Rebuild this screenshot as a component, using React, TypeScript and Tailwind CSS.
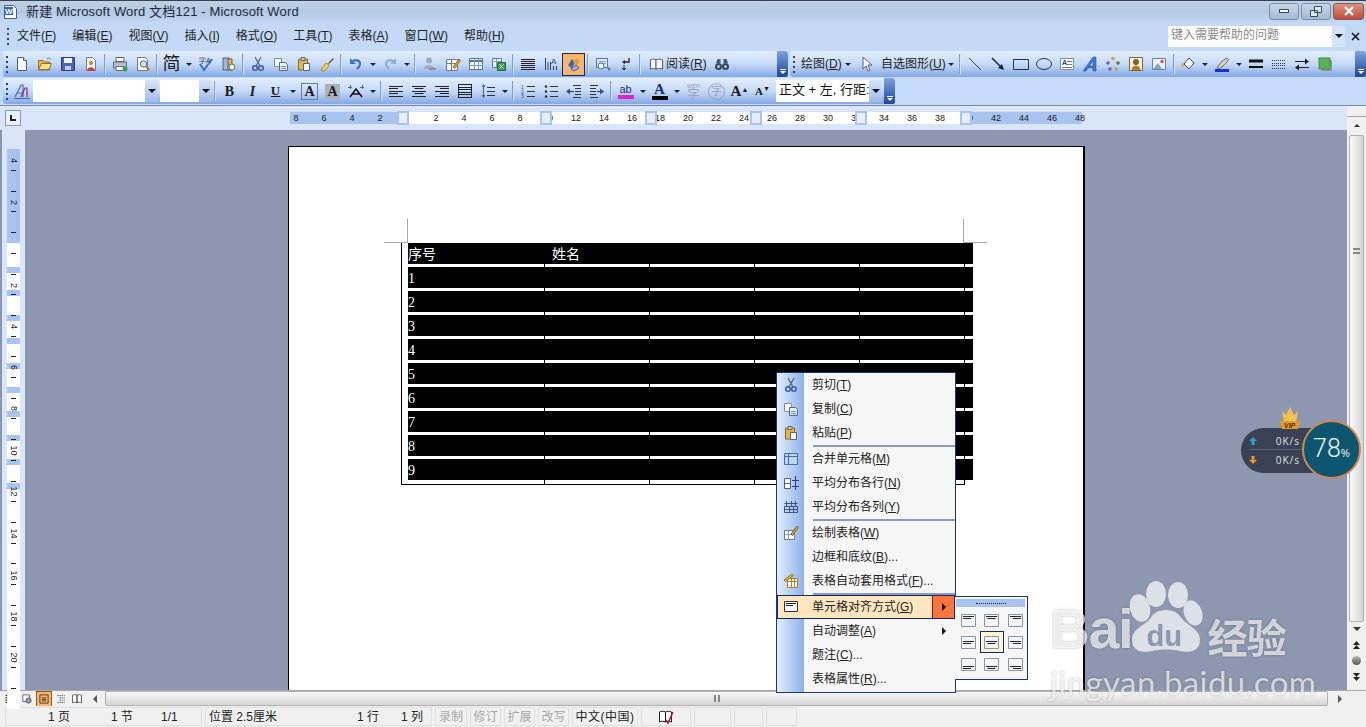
import React from 'react';

const icons: Record<string, React.ReactNode> = {
  doc: <><path d="M3.500 1.500h6l3 3v10h-9z" fill="#fff" stroke="#50607c" /><path d="M9.500 1.500v3h3" fill="#dde6f5" stroke="#50607c" /></>,
  open: <><path d="M1.500 4.500h5l1 1.500h5v8h-11z" fill="#e8b948" stroke="#96702a" /><path d="M1.500 13.500l3-6h10l-2.500 6z" fill="#fbe08c" stroke="#96702a" /><path d="M10 3c1.500-1.500 3-1 4 .5" fill="none" stroke="#3f7fd0" /></>,
  save: <><path d="M1.500 1.500h13v13h-13z" fill="#4b63b5" stroke="#2c3c80" /><path d="M4 2h8v5H4z" fill="#f0f3fa" /><path d="M5 10h6v4H5z" fill="#c5cbdc" /></>,
  perm: <><path d="M3.500 1.500h6l3 3v10h-9z" fill="#fff" stroke="#6c7a92" /><circle cx="8" cy="7" r="2.200" fill="#d88a4a" /><path d="M4 15c0-5 8-5 8 0z" fill="#c8402e" /></>,
  print: <><path d="M4 1.500h8v4H4z" fill="#fff" stroke="#667" /><path d="M1.500 6h13v6h-13z" fill="#b9bfcb" stroke="#667" /><path d="M4 10.500h8v4H4z" fill="#fff" stroke="#667" /><circle cx="13" cy="13" r="2.500" fill="#2fa344" /></>,
  preview: <><path d="M2.500 1.500h8l2 2v11h-10z" fill="#fff" stroke="#6c7a92" /><circle cx="8.500" cy="8" r="3.200" fill="#cfe3f7" stroke="#5a6a85" /><path d="M11 10.500l3.500 3.500" stroke="#b57a2e" strokeWidth="2" /></>,
  spell: <><path d="M2 8l4 6 8-11" fill="none" stroke="#3e6fc4" strokeWidth="2" /><text x="1" y="7" fontSize="7" fill="#333" fontFamily="Liberation Sans">字A</text></>,
  research: <><path d="M2 2h6v12H2z" fill="#9fb6dd" stroke="#52658b" /><path d="M7 3h4v11H7z" fill="#d8b26a" stroke="#7a5e2a" /><circle cx="11" cy="11" r="3" fill="#e6f0fb" stroke="#4c8a3c" /></>,
  cut: <><circle cx="5" cy="12" r="2.300" fill="none" stroke="#3c5da8" strokeWidth="1.500" /><circle cx="11" cy="12" r="2.300" fill="none" stroke="#3c5da8" strokeWidth="1.500" /><path d="M6 10L11 1M10 10L5 1" stroke="#5b6678" strokeWidth="1.300" /></>,
  copy: <><path d="M1.500 2.500h7v8h-7z" fill="#fff" stroke="#7f8ba0" /><path d="M6.500 6.500h6l2 2v6h-8z" fill="#e6eefa" stroke="#516a97" /><path d="M8 10.500h5M8 12.500h5" stroke="#7f8ba0" /></>,
  paste: <><path d="M2.500 3h9v11h-9z" fill="#e3b64c" stroke="#8a6a23" /><path d="M5 1.500h4v3H5z" fill="#c7cad2" stroke="#667" /><path d="M7.500 7.500h6v7h-6z" fill="#fff" stroke="#55647e" /></>,
  painter: <><path d="M9 7l5-5 1 1-5 5z" fill="#6e5a34" /><path d="M2 13c2 0 3-4 5-6l3 2c-1 3-4 6-7 6z" fill="#f0cf60" stroke="#a8872f" /></>,
  undo: <><path d="M4 6c3-3 8-2 8 2 0 2-1 3-3 5" fill="none" stroke="#3e72c4" strokeWidth="2.200" /><path d="M2 2v6h6z" fill="#3e72c4" /></>,
  redo: <><path d="M12 6C9 3 4 4 4 8c0 2 1 3 3 5" fill="none" stroke="#8db0de" strokeWidth="2.200" /><path d="M14 2v6H8z" fill="#8db0de" /></>,
  link: <><circle cx="7" cy="4.500" r="3" fill="#a3abb8" /><path d="M2 13c0-5 10-5 10 0z" fill="#a3abb8" /><path d="M7 13h7" stroke="#8a93a3" strokeWidth="2" /></>,
  tb: <><path d="M1.500 3.500h11v11h-11z" fill="#fff" stroke="#6a7f9f" /><path d="M1.500 7.500h11M6.500 3.500v11" stroke="#6a7f9f" /><path d="M8 11l6-8 1.500 1.500-6 8z" fill="#e2a33f" stroke="#8a6a23" /></>,
  table: <><path d="M1.500 2.500h13v11h-13z" fill="#fff" stroke="#5473a8" /><path d="M1.500 5h13" stroke="#5473a8" strokeWidth="2" /><path d="M1.500 9.500h13M6.500 3v10M10.500 3v10" stroke="#7f9cc9" /></>,
  excel: <><path d="M1.500 2.500h9v9h-9z" fill="#eef3fb" stroke="#5473a8" /><path d="M1.500 5.500h9M5.500 3v8" stroke="#7f9cc9" /><path d="M6.500 6.500h8v8h-8z" fill="#3f9c4a" stroke="#236b2c" /><path d="M8.500 8.500l4 4m0-4l-4 4" stroke="#fff" /></>,
  cols: <path d="M1 3.500h14M1 5.500h14M1 7.500h14M1 9.500h14M1 11.500h14M1 13.500h14" stroke="#222" />,
  showhide: <><path d="M2.500 2v12M5 6v8M7.500 6v8" stroke="#39465e" /><text x="8" y="8" fontSize="8" fill="#27408b" fontFamily="Liberation Sans">A</text><path d="M10.500 10v4M13.500 10v4" stroke="#39465e" /></>,
  docmap: <><path d="M2 9l4-6 3 3-3 7z" fill="#3e66b8" /><path d="M7 5l4-3 3 4-4 4z" fill="#d8a24a" /><path d="M5 13l5-4 3 3-5 3z" fill="#9ab3dd" stroke="#46608f" /></>,
  help2: <><path d="M1.500 2.500h11v9h-11z" fill="#dfe9f7" stroke="#5c7398" /><path d="M4 5.500h7M4 7.500h7" stroke="#7f9cc9" /><circle cx="6" cy="10" r="3" fill="#f3f7ff" stroke="#3d6eb2" /><path d="M13 12l2 2" stroke="#56657c" strokeWidth="2" /></>,
  return2: <><path d="M11 2v4H6" fill="none" stroke="#222" strokeWidth="1.300" /><path d="M7 4L4 6l3 2z" fill="#222" /><path d="M6 9v5M4 12l2 2 2-2" fill="none" stroke="#222" /></>,
  book: <><path d="M1.500 3c2-1 4-1 6 0v10c-2-1-4-1-6 0z" fill="#f4f7fd" stroke="#45546e" /><path d="M7.500 3c2-1 5-1 7 0v10c-2-1-5-1-7 0z" fill="#f4f7fd" stroke="#45546e" /></>,
  binoc: <><path d="M2 7l1.500-4h3V7M9.500 7V3h3L14 7" fill="#4a5a78" /><circle cx="4.500" cy="10.500" r="3.500" fill="#39485f" /><circle cx="11.500" cy="10.500" r="3.500" fill="#39485f" /><circle cx="4.500" cy="10.500" r="1.500" fill="#a9c4ec" /><circle cx="11.500" cy="10.500" r="1.500" fill="#a9c4ec" /></>,
  cursor: <path d="M4 1v12l3-3 2 5 2-1-2-5h4z" fill="#f4f7fd" stroke="#55647e" />,
  line: <path d="M2 2l12 12" stroke="#33405a" />,
  arrow: <><path d="M2 2l10 10" stroke="#1b2334" strokeWidth="1.500" /><path d="M14 14l-6-2 4-4z" fill="#1b2334" /></>,
  rect: <path d="M.5 3.500h15v10H.5z" fill="none" stroke="#243250" />,
  oval: <ellipse cx="8" cy="8" rx="7.500" ry="5.500" fill="none" stroke="#243250" />,
  textbox: <><path d="M1.500 2.500h13v11h-13z" fill="#fff" stroke="#7b8aa3" /><text x="3" y="9" fontSize="7" fontWeight="700" fill="#27408b" fontFamily="Liberation Sans">A</text><path d="M8 5.500h5M8 8.500h5M3 11.500h10" stroke="#6a7a93" /></>,
  wordart: <path d="M1 15L11 1h3v14h-3v-3H6l-2 3zM7.500 10H11V5z" fill="#3f78d0" stroke="#20478f" strokeWidth=".5" />,
  diagram: <><circle cx="8" cy="2.500" r="1.800" fill="#d8a24a" /><circle cx="13" cy="7" r="1.800" fill="#5b7a3c" /><circle cx="3" cy="7" r="1.800" fill="#5b6ea8" /><circle cx="5" cy="13" r="1.800" fill="#5b6ea8" /><circle cx="11" cy="13" r="1.800" fill="#d8a24a" /></>,
  clip: <><path d="M1.500 1.500h13v13h-13z" fill="#fff6d8" stroke="#7a6a3a" /><circle cx="8" cy="6" r="3" fill="#8a5e38" /><path d="M3.500 14c0-6 9-6 9 0z" fill="#bf7a2c" /></>,
  picture: <><path d="M1.500 2.500h13v11h-13z" fill="#eaf1fb" stroke="#6f7f99" /><path d="M2 13l5-6 4 6z" fill="#8ba0c4" /><circle cx="11" cy="5.500" r="1.700" fill="#d5503f" /></>,
  fill: <><path d="M4 8l5-6 5 5-5 6z" fill="#fff" stroke="#3d4a62" /><path d="M2 6c0 2-1 4 0 5s2-1 1.500-3z" fill="#d7a23a" /></>,
  pen: <><path d="M1 13h14v3H1z" fill="#1c34c8" /><path d="M3 12c2-4 6-8 10-10l1.500 1.500c-2 4-6 7-9 9z" fill="#e9d59a" stroke="#4869b0" /></>,
  thick: <><path d="M1 5h14" stroke="#111" strokeWidth="3" /><path d="M1 11h14" stroke="#111" strokeWidth="2" /></>,
  dash: <path d="M1 4.500h14M1 7.500h14M1 9.500h14M1 12.500h14" stroke="#333" strokeDasharray="1 1" />,
  swap: <><path d="M1 5.500h11" stroke="#222" /><path d="M15 5.500l-4-3v6z" fill="#222" /><path d="M4 11.500h11" stroke="#222" /><path d="M1 11.500l4-3v6z" fill="#222" /></>,
  shadow: <><path d="M4 4h11v11H4z" fill="#8a9aa0" /><path d="M2 2h11v11H2z" fill="#5fb05f" stroke="#3c8c3c" /></>,
  styles: <><path d="M1 14L7 2h2v12M3.500 10H9" fill="none" stroke="#4566b8" strokeWidth="1.200" /><path d="M7 14l4-9h2v9" fill="none" stroke="#8a2f7f" strokeWidth="1.200" /><path d="M0 15.500h16" stroke="#4566b8" /></>,
  left: <path d="M1 3.500h14M1 5.500h9M1 8.500h14M1 10.500h9M1 13.500h14" stroke="#222" />,
  center: <path d="M1 3.500h14M3.500 5.500h9M1 8.500h14M3.500 10.500h9M1 13.500h14" stroke="#222" />,
  right: <path d="M1 3.500h14M6 5.500h9M1 8.500h14M6 10.500h9M1 13.500h14" stroke="#222" />,
  distribute: <path d="M1 1.500h14M1 14.500h14M1 4.500h14M1 6.500h14M1 9.500h14M1 11.500h14M1.500 1v14M14.500 1v14" stroke="#222" />,
  spacing: <><path d="M3.500 2v12" stroke="#3a66b0" /><path d="M3.500 1l-2 3h4zM3.500 15l-2-3h4z" fill="#3a66b0" /><path d="M7 4.500h8M7 8.500h8M7 12.500h8" stroke="#333" /></>,
  numbers: <><path d="M7 3.500h8M7 8.500h8M7 13.500h8" stroke="#333" /><text x="1" y="6" fontSize="5" fill="#2a4ea0" fontFamily="Liberation Sans">1</text><text x="1" y="10.500" fontSize="5" fill="#2a4ea0" fontFamily="Liberation Sans">2</text><text x="1" y="15" fontSize="5" fill="#2a4ea0" fontFamily="Liberation Sans">3</text></>,
  bullets: <><path d="M7 3.500h8M7 8.500h8M7 13.500h8" stroke="#333" /><circle cx="3" cy="3.500" r="1.300" fill="#333" /><circle cx="3" cy="8.500" r="1.300" fill="#333" /><circle cx="3" cy="13.500" r="1.300" fill="#333" /></>,
  outdent: <><path d="M7 2.500h8M7 14.500h8M9 5.500h6M9 8.500h6M9 11.500h6M1 8.500h7" stroke="#333" /><path d="M0 8.500l4-3v6z" fill="#2a4ea0" /></>,
  indent: <><path d="M1 2.500h8M1 14.500h8M1 5.500h6M1 8.500h6M1 11.500h6M8 8.500h7" stroke="#333" /><path d="M15 8.500l-4-3v6z" fill="#2a4ea0" /></>,
  merge: <><path d="M1.500 2.500h13v11h-13z" fill="#bcd6f6" stroke="#4a6a9f" /><path d="M1.500 5.500h13M5.500 2.500v11" stroke="#4a6a9f" /></>,
  evenrow: <><path d="M1.500 3.500h6v10h-6zM1.500 8.500h6" fill="#fff" stroke="#4a5f85" /><path d="M12.500 1v14M9 5.500h7M9 11.500h7" stroke="#27408b" /></>,
  evencol: <path d="M1.500 7.500h13v6h-13zM1.500 10.500h13M6.500 7.500v6M10.500 7.500v6M3.500 2v5M8.500 2v5M12.500 2v5M1.500 4.500h13" fill="none" stroke="#3d5583" />,
  drawtable: <><path d="M1.500 5.500h10v9h-10z" fill="#fff" stroke="#63789a" /><path d="M1.500 9.500h10M5.500 5.500v9" stroke="#8ca1c2" /><path d="M8 9l6-8 1.500 1.500-6 8z" fill="#e2a33f" stroke="#7a5c1f" /></>,
  autotable: <><path d="M4.500 5.500h10v9h-10z" fill="#fff" stroke="#c3782b" /><path d="M4.500 8.500h10M8.500 5.500v9M11.500 5.500v9" stroke="#c3782b" /><path d="M1 7l8-6 1.500 1.500-8 6z" fill="#e7b531" stroke="#93701c" /></>,
  cellalign: <><path d="M1.500 2.500h13v10h-13z" fill="#f5f7fb" stroke="#333" /><path d="M3 4.500h10M3 6.500h7" stroke="#222" /></>,
  spellbook: <><path d="M1.500 3c2-1 4-1 6 0v10c-2-1-4-1-6 0zM7.500 3c2-1 4-1 6 0v10c-2-1-4-1-6 0z" fill="#fff" stroke="#222" /><path d="M8 11l2 3 5-11" fill="none" stroke="#a01c3c" strokeWidth="1.500" /></>,
  normal: <path d="M2 3.500h12M2 6.500h12M2 9.500h12M2 12.500h12" stroke="#111" strokeWidth="1.300" />,
  web: <><path d="M2.500 2.500h9v9h-9z" fill="#fff" stroke="#445" /><circle cx="10" cy="10" r="3.500" fill="#8a9ab8" stroke="#445" /></>,
  page: <><path d="M2.500 2.500h11v11h-11z" fill="none" stroke="#222" /><path d="M5 6.500h6M5 8.500h6M5 10.500h6" stroke="#222" /></>,
  outline: <path d="M3 3.500h10M6 6.500h7M6 9.500h7M3 12.500h10" stroke="#333" strokeDasharray="2 1" />,
  reading: <path d="M2 3c2-1 4-1 6 0v10c-2-1-4-1-6 0zM8 3c2-1 4-1 6 0v10c-2-1-4-1-6 0z" fill="#fff" stroke="#333" />,
};

const Icon = ({ name, size = 16 }: { name: string; size?: number }) => (
  <svg className="shrink-0" width={size} height={size} viewBox="0 0 16 16">{icons[name]}</svg>
);

const Tool = ({ name, active }: { name: string; active?: boolean }) => (
  <div className={`w-[23px] h-[23px] shrink-0 flex items-center justify-center ${active ? 'bg-[#fbb56a] border border-[#10296f]' : ''}`}>
    <Icon name={name} />
  </div>
);

const Glyph = ({ children }: { children: React.ReactNode }) => (
  <div className="w-[23px] h-[23px] shrink-0 flex items-center justify-center text-[#1a1a1a]">{children}</div>
);

const Drop = () => (
  <div className="w-[11px] h-[23px] shrink-0 flex items-center justify-center">
    <div className="border-x-[3px] border-t-[3px] border-x-transparent border-t-[#222]" />
  </div>
);

const Sep = () => (
  <div className="w-[6px] h-[20px] shrink-0 flex justify-center">
    <div className="w-px h-full bg-[#7f9fd0] border-r border-white/70 box-content" />
  </div>
);

const Grip = () => (
  <div className="w-[7px] h-[19px] shrink-0 flex flex-col justify-between items-center py-px">
    {[0, 1, 2, 3].map((i) => (
      <div key={i} className="w-[2px] h-[2px] bg-[#27408b]" />
    ))}
  </div>
);

const Chevron = ({ w }: { w: number }) => (
  <div
    className="h-full shrink-0 flex flex-col items-center justify-end pb-[3px] rounded-r-[3px] bg-gradient-to-b from-[#7ea2e0] to-[#1f4698]"
    style={{ width: w }}
  >
    <div className="w-[6px] h-px bg-white mb-px" />
    <div className="border-x-[3px] border-t-[3px] border-x-transparent border-t-white" />
  </div>
);

const Combo = ({ w, children }: { w: number; children?: React.ReactNode }) => (
  <div className="h-[22px] flex bg-white shrink-0" style={{ width: w }}>
    <div className="flex-1 min-w-0 overflow-hidden whitespace-nowrap pl-[3px] text-[13px] leading-[19px] text-[#111]">{children}</div>
    <div className="w-[13px] h-full bg-gradient-to-b from-[#d6e4f8] to-[#9ebbe9] flex items-center justify-center">
      <div className="border-x-[4px] border-t-[4px] border-x-transparent border-t-[#111]" />
    </div>
  </div>
);

const barBg = 'bg-gradient-to-b from-[#e3eefd] via-[#c6daf7] to-[#84a8e4]';

const menus: [string, string][] = [
  ['文件', 'F'], ['编辑', 'E'], ['视图', 'V'], ['插入', 'I'], ['格式', 'O'],
  ['工具', 'T'], ['表格', 'A'], ['窗口', 'W'], ['帮助', 'H'],
];

const Label = ({ text, k, tail }: { text: string; k: string; tail?: string }) => (
  <span className="whitespace-nowrap">
    {text}(<u>{k}</u>){tail}
  </span>
);

const TitleBar = () => (
  <div className="h-[23px] shrink-0 flex items-center border-t border-[#2a4560] bg-gradient-to-b from-[#c3d0de] via-[#b4c9e3] to-[#c3d8f4]">
    <div className="w-[26px] pl-[3px] flex">
      <svg width="15" height="16" viewBox="0 0 15 16">
        <path d="M1.500 1.500h9l3 3v10h-12z" fill="#fff" stroke="#425a85" />
        <path d="M1 3h9v8H1z" fill="#3566b8" />
        <text x="2" y="10" fontSize="8" fontWeight="700" fill="#fff" fontFamily="Liberation Sans">W</text>
      </svg>
    </div>
    <span className="text-[13px] text-[#1b2a40] tracking-[.15px]">新建 Microsoft Word 文档121 - Microsoft Word</span>
    <div className="ml-auto flex gap-[2px] pr-[2px] pb-[2px]">
      <div className="w-[30px] h-[17px] rounded-[3px] border border-[#7d8ea5] bg-gradient-to-b from-[#c8d6e8] to-[#a4b8d2] flex items-center justify-center">
        <div className="w-[10px] h-[4px] border border-[#3c4a5e] bg-white" />
      </div>
      <div className="w-[30px] h-[17px] rounded-[3px] border border-[#7d8ea5] bg-gradient-to-b from-[#c8d6e8] to-[#a4b8d2] flex items-center justify-center">
        <svg width="12" height="11" viewBox="0 0 12 11"><path d="M4.500.5h7v6h-7zM.5 4.500h7v6h-7z" fill="#dfe8f3" stroke="#3c4a5e" /></svg>
      </div>
      <div className="w-[31px] h-[17px] rounded-[3px] border border-[#8a5a56] bg-gradient-to-b from-[#dc8f84] to-[#c04a3c] flex items-center justify-center">
        <svg width="12" height="10" viewBox="0 0 12 10"><path d="M2 1l8 8M10 1L2 9" stroke="#fff" strokeWidth="2.400" /></svg>
      </div>
    </div>
  </div>
);

const MenuBar = () => (
  <div className="h-[28px] shrink-0 flex items-center pb-[2px] bg-gradient-to-b from-[#c3d8f4] to-[#c4daf8] text-[12px] text-[#222] pl-[4px]">
    <Grip />
    <div className="flex gap-[16px] pl-[6px]">
      {menus.map(([t, k]) => (
        <Label key={k} text={t} k={k} />
      ))}
    </div>
    <div className="ml-auto flex items-center">
      <div className="w-[164px] h-[21px] bg-white text-[#8a8a8a] pl-[3px] leading-[18px]">键入需要帮助的问题</div>
      <div className="w-[13px] h-[21px] bg-[#d5e3f8] flex items-center justify-center">
        <div className="border-x-[4px] border-t-[4px] border-x-transparent border-t-[#111]" />
      </div>
      <div className="w-[21px] flex justify-center">
        <svg width="9" height="9" viewBox="0 0 9 9"><path d="M1 1l7 7M8 1L1 8" stroke="#111" strokeWidth="1.500" /></svg>
      </div>
    </div>
  </div>
);

const ToolbarOne = () => (
  <div className="h-[26px] shrink-0 flex pl-[3px] text-[12px] text-[#222] bg-[#c4daf8]">
    <div className={`w-[785px] h-full shrink-0 flex items-center rounded-l-[3px] ${barBg}`}>
      <Grip />
      <Tool name="doc" /><Tool name="open" /><Tool name="save" /><Tool name="perm" />
      <Sep />
      <Tool name="print" /><Tool name="preview" />
      <Sep />
      <Glyph><span className="text-[18px] leading-none">简</span></Glyph>
      <Drop />
      <Tool name="spell" /><Tool name="research" />
      <Sep />
      <Tool name="cut" /><Tool name="copy" /><Tool name="paste" /><Tool name="painter" />
      <Sep />
      <Tool name="undo" /><Drop /><Tool name="redo" /><Drop />
      <Sep />
      <Tool name="link" /><Tool name="tb" /><Tool name="table" /><Tool name="excel" />
      <Sep />
      <Tool name="cols" /><Tool name="showhide" /><Tool name="docmap" active />
      <Sep />
      <Tool name="help2" /><Tool name="return2" />
      <Sep />
      <div className="w-[67px] shrink-0 flex items-center gap-[2px] pl-[6px]">
        <Icon name="book" size={15} />
        <Label text="阅读" k="R" />
      </div>
      <Tool name="binoc" />
      <div className="ml-auto h-full"><Chevron w={11} /></div>
    </div>
    <div className={`ml-[2px] flex-1 h-full flex items-center rounded-l-[3px] ${barBg}`}>
      <Grip />
      <span className="pl-[4px] w-[45px]"><Label text="绘图" k="D" /></span>
      <Drop />
      <div className="w-[2px]" />
      <Tool name="cursor" />
      <div className="w-[3px]" />
      <Label text="自选图形" k="U" />
      <Drop />
      <Sep />
      <div className="w-px" />
      <Tool name="line" /><Tool name="arrow" /><Tool name="rect" /><Tool name="oval" /><Tool name="textbox" />
      <Tool name="wordart" /><Tool name="diagram" /><Tool name="clip" /><Tool name="picture" />
      <Sep />
      <Tool name="fill" /><Drop /><Tool name="pen" /><Drop />
      <Tool name="thick" /><Tool name="dash" /><Tool name="swap" /><Tool name="shadow" />
      <div className="ml-auto h-full"><Chevron w={11} /></div>
    </div>
  </div>
);

const ToolbarTwo = () => (
  <div className="h-[27px] shrink-0 mt-px flex pl-[3px] pb-px bg-[#c4daf8]">
    <div className={`w-[892px] h-full flex items-center rounded-l-[3px] ${barBg}`}>
      <Grip />
      <Tool name="styles" />
      <Combo w={125} />
      <div className="w-[2px]" />
      <Combo w={52} />
      <Sep />
      <Glyph><span className="font-['Liberation_Serif',serif] font-bold text-[14px]">B</span></Glyph>
      <Glyph><span className="font-['Liberation_Serif',serif] italic font-bold text-[14px]">I</span></Glyph>
      <Glyph><span className="font-['Liberation_Serif',serif] font-bold underline text-[13px]">U</span></Glyph>
      <Drop />
      <Glyph><span className="font-['Liberation_Serif',serif] font-bold text-[14px] leading-[15px] px-[2px] border border-[#6b7d9c]">A</span></Glyph>
      <Glyph><span className="font-['Liberation_Serif',serif] font-bold text-[14px] leading-[15px] px-[2px] bg-[#aab0bc]">A</span></Glyph>
      <Glyph>
        <svg width="18" height="16" viewBox="0 0 18 16">
          <path d="M3 14L9 6l6 8M5 11h8" fill="none" stroke="#111" strokeWidth="1.500" />
          <path d="M1 4.500h4M3.500 2v4M13 4.500h4M15.500 2v4" stroke="#2a6cc4" />
        </svg>
      </Glyph>
      <Drop />
      <Sep />
      <Tool name="left" /><Tool name="center" /><Tool name="right" /><Tool name="distribute" />
      <Tool name="spacing" /><Drop />
      <Sep />
      <Tool name="numbers" /><Tool name="bullets" /><Tool name="outdent" /><Tool name="indent" />
      <Sep />
      <Glyph>
        <div className="flex flex-col items-center">
          <span className="text-[11px] leading-[12px] text-[#1c2c78]">ab</span>
          <div className="w-[16px] h-[4px] bg-[#e221d0]" />
        </div>
      </Glyph>
      <Drop />
      <Glyph>
        <div className="flex flex-col items-center">
          <span className="font-['Liberation_Serif',serif] font-bold text-[15px] leading-[14px] text-[#1c2c78]">A</span>
          <div className="w-[16px] h-[4px] bg-black" />
        </div>
      </Glyph>
      <Drop />
      <Glyph>
        <div className="flex flex-col items-center text-[#9aa3b3]">
          <span className="text-[7px] leading-[7px]">wén</span>
          <span className="text-[12px] leading-[12px]">字</span>
        </div>
      </Glyph>
      <Glyph><span className="w-[17px] h-[17px] rounded-full border border-[#9aa3b3] text-[11px] leading-[15px] text-center text-[#9aa3b3]">字</span></Glyph>
      <Glyph><span className="font-['Liberation_Serif',serif] font-bold text-[15px]">A<sup className="text-[7px]">▲</sup></span></Glyph>
      <Glyph><span className="font-['Liberation_Serif',serif] font-bold text-[11px]">A<sup className="text-[7px]">▼</sup></span></Glyph>
      <div className="w-[2px]" />
      <Combo w={106}>正文 + 左, 行距:</Combo>
      <div className="ml-auto h-full"><Chevron w={11} /></div>
    </div>
  </div>
);

const hNums = [-8, -6, -4, -2, 0, 2, 4, 6, 8, 10, 12, 14, 16, 18, 20, 22, 24, 26, 28, 30, 32, 34, 36, 38, 40, 42, 44, 46, 48];
const hMarks = [107, 250, 355, 460, 565, 670];

const HRuler = () => (
  <div className="h-[25px] shrink-0 flex items-center bg-[#d9e6fa] border-t border-[#7f8a9c] relative">
    <div className="w-[16px] h-[16px] ml-[5px] bg-[#e8f0fc] border border-[#8a99b3] flex items-center justify-center">
      <div className="w-[6px] h-[6px] border-l-2 border-b-2 border-[#222]" />
    </div>
    <div className="ml-[269px] w-[792px] h-[12px] relative flex bg-[linear-gradient(90deg,#a9c3ef_118px,#ffffff_118px,#ffffff_674px,#a9c3ef_674px)]">
      <div className="flex -ml-[8px]">
        {hNums.map((n, i) => (
          <div key={i} className="w-[28px] shrink-0 text-center text-[9px] leading-[12px] text-[#222] font-['Liberation_Sans',sans-serif]">
            {n === 0 ? '' : Math.abs(n)}
          </div>
        ))}
      </div>
      {hMarks.map((x) => (
        <div key={x} className="absolute -top-px w-[12px] h-[14px] bg-[#e6eefb] border-2 border-[#a9c3ef]" style={{ left: x }} />
      ))}
    </div>
    <div className="absolute right-0 top-0 w-[19px] h-full bg-[#f0f0f0] flex flex-col items-center justify-end pb-[3px]">
      <div className="w-full h-px bg-[#a8a8a8] mb-[7px]" />
      <div className="border-x-[3px] border-b-[3px] border-x-transparent border-b-[#333]" />
    </div>
  </div>
);

const vBlue = [267, 290, 315, 338, 363, 387, 411, 435, 459, 483];
const vNums: [number, string][] = [
  [160, '4'], [202, '2'], [285, '2'], [326, '4'], [367, '6'], [408, '8'], [450, '10'],
  [491, '12'], [533, '14'], [575, '16'], [616, '18'], [657, '20'],
];

const VRuler = () => (
  <div className="w-[25px] shrink-0 h-full bg-[#d9e6fa] border-l-2 border-[#8a96ad] pl-[5px] pt-[19px]">
    <div className="w-[13px] h-[560px] bg-white relative overflow-hidden">
      <div className="absolute inset-x-0 top-0 h-[94px] bg-[#a9c3ef]" />
      {vBlue.map((y) => (
        <div key={y} className="absolute inset-x-0 h-[6px] bg-[#a9c3ef]" style={{ top: y - 149 }} />
      ))}
      {Array.from({ length: 26 }, (_, i) => (
        <div key={i} className="absolute left-[4px] w-[5px] h-px bg-[#222]" style={{ top: i * 20.7 + 21 }} />
      ))}
      {vNums.map(([y, t]) => (
        <div key={y} className="absolute left-0 w-[13px] h-[14px] flex items-center justify-center" style={{ top: y - 156 }}>
          <span className="rotate-90 text-[9px] leading-none text-[#222] font-['Liberation_Sans',sans-serif]">{t}</span>
        </div>
      ))}
    </div>
  </div>
);

const rowsData = ['序号', '1', '2', '3', '4', '5', '6', '7', '8', '9'];
const columns = [143, 105, 105, 105];

const DocTable = () => (
  <div className="w-[564px] ml-[112px] font-['Liberation_Serif','Noto_Sans_CJK_SC',serif] text-white text-[14px] border-b border-black">
    {rowsData.map((first, i) => (
      <div key={first} className={`flex ${i === 9 ? 'h-[25px]' : 'h-[24px]'}`}>
        {columns.map((w, c) => (
          <div key={c} className="border-l border-black shrink-0" style={{ width: w }}>
            <div className={`h-[21px] bg-black leading-[23px] ${c === 0 ? 'ml-[6px]' : '-ml-px'}`}>
              {c === 0 && first}
              {c === 1 && i === 0 && <span className="pl-[8px]">姓名</span>}
            </div>
          </div>
        ))}
        <div className="border-x border-black w-[106px] shrink-0">
          <div className="h-[21px] bg-black w-[114px] -ml-px" />
        </div>
      </div>
    ))}
  </div>
);

const Canvas = () => (
  <div className="flex-1 h-full min-w-0 bg-[#8d98b0] overflow-hidden pl-[263px] pt-[16px]">
    <div className="w-[797px] h-[601px] bg-white border border-black border-r-2 pt-[96px] relative">
      <div className="absolute left-[118px] top-[72px] w-px h-[24px] bg-[#a8a8a8]" />
      <div className="absolute left-[95px] top-[95px] w-[24px] h-px bg-[#a8a8a8]" />
      <div className="absolute left-[674px] top-[72px] w-px h-[24px] bg-[#a8a8a8]" />
      <div className="absolute left-[674px] top-[95px] w-[24px] h-px bg-[#a8a8a8]" />
      <DocTable />
    </div>
  </div>
);

const VScroll = () => (
  <div className="w-[19px] shrink-0 h-full bg-[#f0f0f0] flex flex-col items-center pt-[5px]">
    <div className="w-[15px] h-[487px] rounded-[2px] border border-[#b0b0b0] bg-gradient-to-r from-[#fbfbfb] to-[#d6d6d6] flex justify-center pt-[112px]">
      <div className="w-[7px] h-[6px] border-y-2 border-[#888]" />
    </div>
    <div className="mt-[5px] border-x-[4px] border-t-[4px] border-x-transparent border-t-[#333]" />
    <svg className="mt-[10px]" width="11" height="9" viewBox="0 0 11 9"><path d="M5.500 0l3.500 4H2zM5.500 4l3.500 4H2z" fill="#222" /></svg>
    <div className="mt-[6px] w-[9px] h-[9px] rounded-full bg-gradient-to-b from-[#bbb] to-[#555]" />
    <svg className="mt-[7px]" width="11" height="9" viewBox="0 0 11 9"><path d="M5.500 9L2 5h7zM5.500 5L2 1h7z" fill="#222" /></svg>
  </div>
);

const HScroll = () => (
  <div className="h-[16px] shrink-0 flex items-center bg-[#f0f0f0] border-t border-[#a8a8a8] pl-[2px] pr-[14px]">
    <div className="w-[16px] shrink-0 flex justify-center"><Icon name="normal" size={12} /></div>
    <div className="w-[18px] shrink-0 flex justify-center"><Icon name="web" size={12} /></div>
    <div className="w-[16px] h-[16px] shrink-0 flex items-center justify-center bg-[#fbb56a] border border-[#8c5a23]"><Icon name="page" size={12} /></div>
    <div className="w-[17px] shrink-0 flex justify-center"><Icon name="outline" size={12} /></div>
    <div className="w-[16px] shrink-0 flex justify-center"><Icon name="reading" size={12} /></div>
    <div className="w-[20px] shrink-0 flex justify-center">
      <div className="border-y-[4px] border-r-[4px] border-y-transparent border-r-[#555]" />
    </div>
    <div className="flex-1 h-[15px] rounded-[2px] border border-[#b0b0b0] bg-gradient-to-b from-[#fafafa] to-[#d4d4d4] flex items-center justify-center">
      <div className="w-[6px] h-[7px] border-x-2 border-[#888]" />
    </div>
    <div className="w-[24px] shrink-0 flex justify-center">
      <div className="border-y-[4px] border-l-[4px] border-y-transparent border-l-[#555]" />
    </div>
  </div>
);

const Cell = ({ w, dim, children, className = '' }: { w: number; dim?: boolean; children?: React.ReactNode; className?: string }) => (
  <div
    className={`h-[19px] shrink-0 border border-[#e0e0e0] flex items-center whitespace-nowrap ${dim ? 'text-[#a8a8a8] justify-center' : 'text-[#222]'} ${className}`}
    style={{ width: w }}
  >
    {children}
  </div>
);

const StatusBar = () => (
  <div className="h-[21px] shrink-0 flex items-center gap-[3px] bg-[#f0f0f0] pl-[5px] text-[12px]">
    <Cell w={197} className="pl-[42px]">
      <span className="w-[63px]">1 页</span><span className="w-[50px]">1 节</span><span>1/1</span>
    </Cell>
    <Cell w={227} className="pl-[3px]">
      <span className="w-[148px]">位置 2.5厘米</span><span className="w-[44px]">1 行</span><span>1 列</span>
    </Cell>
    <Cell w={32} dim>录制</Cell>
    <Cell w={31} dim>修订</Cell>
    <Cell w={31} dim>扩展</Cell>
    <Cell w={31} dim>改写</Cell>
    <Cell w={66} className="justify-center tracking-[.5px]">中文(中国)</Cell>
    <Cell w={50} className="justify-center"><Icon name="spellbook" size={16} /></Cell>
    <Cell w={37} />
    <Cell w={29} />
    <Cell w={31} />
  </div>
);

type Item = { icon?: string; text: string; k: string; tail?: string; sep?: boolean; sub?: boolean; on?: boolean };

const items: Item[] = [
  { icon: 'cut', text: '剪切', k: 'T' },
  { icon: 'copy', text: '复制', k: 'C' },
  { icon: 'paste', text: '粘贴', k: 'P' },
  { icon: 'merge', text: '合并单元格', k: 'M', sep: true },
  { icon: 'evenrow', text: '平均分布各行', k: 'N' },
  { icon: 'evencol', text: '平均分布各列', k: 'Y' },
  { icon: 'drawtable', text: '绘制表格', k: 'W', sep: true },
  { text: '边框和底纹', k: 'B', tail: '...' },
  { icon: 'autotable', text: '表格自动套用格式', k: 'F', tail: '...' },
  { icon: 'cellalign', text: '单元格对齐方式', k: 'G', sep: true, sub: true, on: true },
  { text: '自动调整', k: 'A', sub: true },
  { text: '题注', k: 'C', tail: '...' },
  { text: '表格属性', k: 'R', tail: '...' },
];

const ContextMenu = () => (
  <div className="absolute left-[776px] top-[372px] w-[180px] border border-[#1b3673] text-[12px] text-[#222] bg-[linear-gradient(90deg,#e3eefc_0,#8fb1e8_27px,#f6f6f6_27px)] pb-px">
    {items.map((it) => (
      <React.Fragment key={it.text}>
        {it.sep && <div className="h-[2px] ml-[36px] bg-[#8a9cba]" />}
        <div
          className={`flex items-center h-[24px] ${
            it.on ? 'bg-[#ffe6bf] outline outline-1 -outline-offset-1 outline-[#10296f]' : ''
          }`}
        >
          <div className="w-[27px] shrink-0 flex justify-center">{it.icon && <Icon name={it.icon} />}</div>
          <div className="pl-[8px] flex-1"><Label text={it.text} k={it.k} tail={it.tail} /></div>
          {it.sub && (
            <div className={`w-[23px] h-full flex items-center justify-center ${it.on ? 'bg-[#f9753b] border border-[#7d1c2c]' : ''}`}>
              <div className="border-y-[4px] border-l-[4px] border-y-transparent border-l-[#111]" />
            </div>
          )}
        </div>
      </React.Fragment>
    ))}
  </div>
);

const aligns = ['left', 'center', 'right'];

const AlignMenu = () => (
  <div className="absolute left-[955px] top-[596px] w-[73px] h-[84px] border border-[#1b3673] border-l-0 bg-[#f6f6f6] pt-[2px] pl-[1px]">
    <div className="h-[8px] w-[69px] bg-[#a9c3ee] flex items-center justify-center">
      <div className="w-[30px] h-px border-t border-dotted border-[#10296f]" />
    </div>
    <div className="grid grid-cols-3 pl-[1px] pt-[2px]">
      {[0, 1, 2].flatMap((r) =>
        aligns.map((a, c) => (
          <div
            key={`${r}${c}`}
            className={`h-[22px] flex items-center justify-center ${r === 1 && c === 1 ? 'border border-[#10296f] bg-[#fff0d0]' : ''}`}
          >
            <svg width="15" height="13" viewBox="0 0 15 13">
              <path d="M.5.500h14v12H.5z" fill="#f4f6fa" stroke="#8794ab" />
              <path d={`M2 ${2.5 + r * 3}h11M${c === 2 ? 5 : c === 1 ? 3.5 : 2} ${4.5 + r * 3}h8`} stroke="#222" />
            </svg>
          </div>
        )),
      )}
    </div>
  </div>
);

const NetWidget = () => (
  <div className="absolute left-[1241px] top-[405px] w-[120px] h-[75px] flex items-center font-['Open_Sans',sans-serif]">
    <div className="absolute left-[38px] top-[1px]">
      <svg width="22" height="24" viewBox="0 0 22 24">
        <path d="M3 5l4 4 4-8 4 8 4-4-2 11H5z" fill="#f1c24e" />
        <path d="M1 15h20l-2 8H3z" fill="#e59a2a" />
        <text x="5" y="22" fontSize="7" fontWeight="700" fontStyle="italic" fill="#5a3000" fontFamily="Liberation Sans">VIP</text>
      </svg>
    </div>
    <div className="w-[72px] h-[45px] mt-[15px] rounded-l-full bg-[#394152] text-[#dde3ea] text-[10px] leading-none flex flex-col justify-center pl-[8px] gap-[5px]">
      <div className="flex items-center justify-between pr-[13px] border-b border-[#596274] pb-[3px]">
        <svg width="8" height="8" viewBox="0 0 8 8"><path d="M4 0l4 4H5.500v4h-3V4H0z" fill="#2d9fd8" /></svg>
        <span className="tracking-[1px]">0K/s</span>
      </div>
      <div className="flex items-center justify-between pr-[13px]">
        <svg width="8" height="8" viewBox="0 0 8 8"><path d="M4 8L0 4h2.500V0h3v4H8z" fill="#e8932c" /></svg>
        <span className="tracking-[1px]">0K/s</span>
      </div>
    </div>
    <div className="absolute left-[61px] top-[15px] w-[59px] h-[59px] rounded-full bg-[#0e5570] border-2 border-[#d08a52] flex items-baseline justify-center pt-[14px] text-[#e8f6fa]">
      <span className="text-[25px] leading-none font-['Roboto',sans-serif] font-light">78</span>
      <span className="text-[11px] leading-none">%</span>
    </div>
  </div>
);

const Watermark = () => (
  <div className="absolute left-[1050px] top-[580px] w-[316px] pointer-events-none text-white/70 [text-shadow:0_0_3px_#00000040]">
    <div className="flex items-end h-[83px] font-['Liberation_Sans',sans-serif] font-bold">
      <span className="text-[55px] leading-[68px] tracking-[-1px]">Bai</span>
      <div className="-ml-[3px] shrink-0 self-start relative w-[74px] h-[76px]">
        <svg width="74" height="76" viewBox="0 0 74 76">
          <g fill="#ffffff" fillOpacity=".7">
            <ellipse cx="26" cy="14" rx="10" ry="13" />
            <ellipse cx="48" cy="15" rx="10" ry="13" />
            <ellipse cx="10" cy="28" rx="10" ry="14" transform="rotate(-15 10 28)" />
            <ellipse cx="63" cy="33" rx="9" ry="13" transform="rotate(-20 63 33)" />
            <path d="M2 60c0-12 14-14 20-24 6-8 22-8 28 0 6 10 20 12 20 24 0 12-12 13-20 11-8-2-20-2-28 0-8 2-20 1-20-11z" />
          </g>
        </svg>
        <span className="absolute left-[17px] top-[41px] text-[29px] leading-[30px] text-[#8d98b0] [text-shadow:none]">du</span>
      </div>
      <span className="text-[40px] leading-[54px] font-['Noto_Sans_CJK_SC',sans-serif] pl-[4px] tracking-[-1px]">经验</span>
    </div>
    <div className="text-[33px] leading-[34px] font-['Lato',sans-serif] tracking-[.4px] pt-[2px]">jingyan.baidu.com</div>
  </div>
);

export default function App() {
  return (
    <div className="relative w-[1366px] h-[727px] overflow-hidden flex flex-col bg-[#c4daf8] font-['Liberation_Sans','Noto_Sans_CJK_SC',sans-serif]">
      <TitleBar />
      <MenuBar />
      <ToolbarOne />
      <ToolbarTwo />
      <HRuler />
      <div className="flex-1 min-h-0 flex">
        <VRuler />
        <Canvas />
        <VScroll />
      </div>
      <HScroll />
      <StatusBar />
      <ContextMenu />
      <AlignMenu />
      <NetWidget />
      <Watermark />
    </div>
  );
}
